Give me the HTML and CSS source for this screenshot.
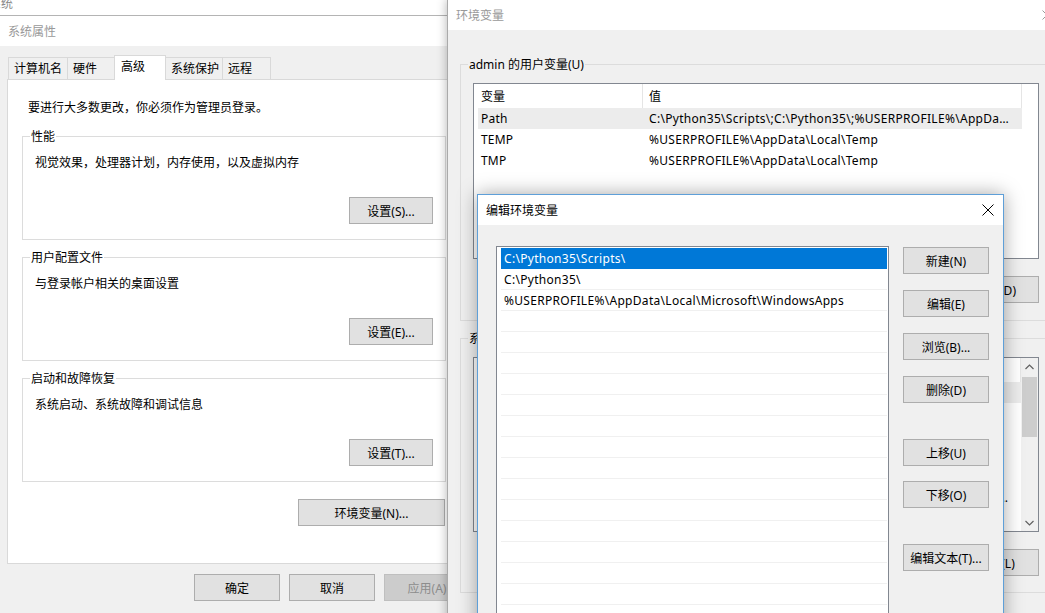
FILE: index.html
```html
<!DOCTYPE html>
<html lang="zh-CN">
<head>
  <meta charset="UTF-8" />
  <title>环境变量</title>
  <link rel="stylesheet" href="styles.css">
</head>
<body>

  <div class="parent-title">系统</div>

  <!-- 系统属性 -->
  <div class="window sys">
    <div class="titlebar">系统属性</div>
    <div class="tabs">
      <div class="tab w1">计算机名</div>
      <div class="tab w2">硬件</div>
      <div class="tab w3 active">高级</div>
      <div class="tab w4">系统保护</div>
      <div class="tab w5">远程</div>
    </div>
    <div class="panel">
      <div class="note">要进行大多数更改，你必须作为管理员登录。</div>

      <div class="group">
        <div class="group-label">性能</div>
        <div class="group-text">视觉效果，处理器计划，内存使用，以及虚拟内存</div>
        <div class="group-foot"><button class="btn btn-set">设置(S)...</button></div>
      </div>

      <div class="group next">
        <div class="group-label">用户配置文件</div>
        <div class="group-text">与登录帐户相关的桌面设置</div>
        <div class="group-foot"><button class="btn btn-set">设置(E)...</button></div>
      </div>

      <div class="group next">
        <div class="group-label">启动和故障恢复</div>
        <div class="group-text">系统启动、系统故障和调试信息</div>
        <div class="group-foot"><button class="btn btn-set">设置(T)...</button></div>
      </div>

      <div class="env-row"><button class="btn btn-env">环境变量(N)...</button></div>
    </div>
    <div class="footer">
      <button class="btn btn-dlg">确定</button>
      <button class="btn btn-dlg">取消</button>
      <button class="btn btn-dlg disabled">应用(A)</button>
    </div>
  </div>

  <!-- 环境变量 -->
  <div class="window env">
    <div class="titlebar">
      <span>环境变量</span>
      <svg class="env-close" width="10" height="10" viewBox="0 0 10 10"><path d="M0.5 0.5 L9.5 9.5 M9.5 0.5 L0.5 9.5" stroke="#999" stroke-width="1"/></svg>
    </div>

    <div class="group env-group user">
      <div class="group-label">admin 的用户变量(U)</div>
      <div class="listview lv-user">
        <div class="lv-main">
          <div class="lv-head">
            <div class="c1">变量</div>
            <div class="c2">值</div>
          </div>
          <div class="lv-row sel"><div class="c1">Path</div><div class="c2">C:\Python35\Scripts\;C:\Python35\;%USERPROFILE%\AppData\Local\Microsoft\WindowsApps;</div></div>
          <div class="lv-row"><div class="c1">TEMP</div><div class="c2">%USERPROFILE%\AppData\Local\Temp</div></div>
          <div class="lv-row"><div class="c1">TMP</div><div class="c2">%USERPROFILE%\AppData\Local\Temp</div></div>
        </div>
      </div>
      <div class="btn-row">
        <button class="btn btn-dlg">新建(N)...</button>
        <button class="btn btn-dlg">编辑(E)...</button>
        <button class="btn btn-dlg">删除(D)</button>
      </div>
    </div>

    <div class="group env-group system">
      <div class="group-label">系统变量(S)</div>
      <div class="listview lv-sys">
        <div class="lv-main">
          <div class="lv-head">
            <div class="c1">变量</div>
            <div class="c2">值</div>
          </div>
          <div class="lv-row sel"><div class="c1">CLASSPATH</div><div class="c2">.;%JAVA_HOME%\lib</div></div>
          <div class="lv-row"><div class="c1">ComSpec</div><div class="c2">C:\Windows\system32\cmd.exe</div></div>
          <div class="lv-row"><div class="c1">JAVA_HOME</div><div class="c2">C:\Program Files\Java\jdk1.8.0_101</div></div>
          <div class="lv-row"><div class="c1">NUMBER_OF_PROCESSORS</div><div class="c2">4</div></div>
          <div class="lv-row"><div class="c1">OS</div><div class="c2">Windows_NT</div></div>
          <div class="lv-row"><div class="c1">Path</div><div class="c2">C:\ProgramData\Oracle\Java\javapath;C:\Windows\system32;C:\Windows;C:\Windows\System32\Wbem</div></div>
          <div class="lv-row"><div class="c1">PATHEXT</div><div class="c2">.COM;.EXE;.BAT;.CMD</div></div>
        </div>
        <div class="scrollbar">
          <div class="sb-arrow">
            <svg width="9" height="6" viewBox="0 0 9 6"><path d="M0.5 5 L4.5 1 L8.5 5" fill="none" stroke="#606060" stroke-width="1.2"/></svg>
          </div>
          <div class="sb-track"><div class="sb-thumb"></div></div>
          <div class="sb-arrow">
            <svg width="9" height="6" viewBox="0 0 9 6"><path d="M0.5 1 L4.5 5 L8.5 1" fill="none" stroke="#606060" stroke-width="1.2"/></svg>
          </div>
        </div>
      </div>
      <div class="btn-row">
        <button class="btn btn-dlg">新建(W)...</button>
        <button class="btn btn-dlg">编辑(I)...</button>
        <button class="btn btn-dlg">删除(L)</button>
      </div>
    </div>
  </div>

  <!-- 编辑环境变量 -->
  <div class="window edit">
    <div class="titlebar">
      <span>编辑环境变量</span>
      <svg class="close" width="12" height="12" viewBox="0 0 12 12"><path d="M0.5 0.5 L11.5 11.5 M11.5 0.5 L0.5 11.5" stroke="#000" stroke-width="1"/></svg>
    </div>
    <div class="edit-body">
      <div class="path-list">
        <div class="path-row sel">C:\Python35\Scripts\</div>
        <div class="path-row">C:\Python35\</div>
        <div class="path-row">%USERPROFILE%\AppData\Local\Microsoft\WindowsApps</div>
        <div class="path-row"></div>
        <div class="path-row"></div>
        <div class="path-row"></div>
        <div class="path-row"></div>
        <div class="path-row"></div>
        <div class="path-row"></div>
        <div class="path-row"></div>
        <div class="path-row"></div>
        <div class="path-row"></div>
        <div class="path-row"></div>
        <div class="path-row"></div>
        <div class="path-row"></div>
        <div class="path-row"></div>
        <div class="path-row"></div>
        <div class="path-row"></div>
      </div>
      <div class="side-btns">
        <button class="btn btn-dlg">新建(N)</button>
        <button class="btn btn-dlg gap">编辑(E)</button>
        <button class="btn btn-dlg gap">浏览(B)...</button>
        <button class="btn btn-dlg gap">删除(D)</button>
        <button class="btn btn-dlg gap-big">上移(U)</button>
        <button class="btn btn-dlg gap-mid">下移(O)</button>
        <button class="btn btn-dlg gap-big">编辑文本(T)...</button>
      </div>
    </div>
  </div>

</body>
</html>
```

FILE: styles.css
```css
* {
  box-sizing: border-box;
}

body {
  margin: 0;
  width: 1045px;
  height: 613px;
  overflow: hidden;
  position: relative;
  background: #fff;
  font-family: "Noto Sans", "Noto Sans CJK SC", sans-serif;
  font-size: 12px;
  color: #000;
}

.parent-title {
  position: absolute;
  left: -11px;
  top: -4px;
  color: #888;
  line-height: 16px;
}

/* windows */
.window {
  position: absolute;
  background: #f0f0f0;
}

.titlebar {
  height: 30px;
  background: #fff;
  padding-left: 8px;
  color: #999;
  display: flex;
  justify-content: space-between;
  align-items: center;
}

.btn {
  height: 27px;
  padding: 0;
  border: 1px solid #adadad;
  background: #e1e1e1;
  font: inherit;
  color: #000;
  display: flex;
  align-items: center;
  justify-content: center;
  white-space: nowrap;
}

.btn.disabled {
  background: #cccccc;
  border-color: #bfbfbf;
  color: #8d8d8d;
}

.btn-set { width: 84px; }
.btn-env { width: 147px; }
.btn-dlg { width: 86px; }

/* system properties */
.sys {
  left: -1px;
  top: 15px;
  width: 480px;
  height: 620px;
  border: 1px solid #b4b4b4;
}

.tabs {
  display: flex;
  align-items: flex-end;
  height: 24px;
  margin-top: 9px;
  padding-left: 8px;
  position: relative;
  z-index: 1;
}

.tab {
  height: 22px;
  line-height: 21px;
  padding-left: 5px;
  margin-right: -1px;
  border: 1px solid #d9d9d9;
  border-bottom: none;
  background: #f0f0f0;
}

.tab.active {
  height: 25px;
  margin-bottom: -1px;
  padding-left: 6px;
  line-height: 22px;
  background: #fff;
  position: relative;
  z-index: 2;
}

.w1 { width: 60px; }
.w2 { width: 48px; }
.w3 { width: 52px; }
.w4 { width: 58px; }
.w5 { width: 49px; }

.panel {
  margin-left: 7px;
  width: 450px;
  height: 485px;
  padding-left: 14px;
  background: #fff;
  border: 1px solid #d9d9d9;
}

.note {
  margin: 20px 0 0 6px;
  line-height: 16px;
}

.group {
  width: 424px;
  height: 104px;
  margin-top: 20px;
  border: 1px solid #dcdcdc;
}

.group.next {
  margin-top: 17px;
}

.group-label {
  width: fit-content;
  margin: -8px 0 0 7px;
  padding: 0 1px;
  line-height: 16px;
  background: #fff;
}

.group-text {
  margin: 10px 0 0 12px;
  line-height: 16px;
}

.group-foot {
  display: flex;
  justify-content: flex-end;
  padding-right: 12px;
  margin-top: 26px;
}

.env-row {
  display: flex;
  justify-content: flex-end;
  width: 424px;
  padding-right: 1px;
  margin-top: 17px;
}

.footer {
  display: flex;
  gap: 9px;
  padding-left: 194px;
  margin-top: 10px;
}

/* environment variables */
.env {
  left: 447px;
  top: -1px;
  width: 640px;
  height: 640px;
  border: 1px solid #aaa;
  box-shadow: 0 0 10px rgba(0, 0, 0, 0.3);
}

.env-close {
  margin-right: 34px;
}

.env-group {
  width: 600px;
  margin: 34px 0 0 12px;
  height: 257px;
}

.env-group.system {
  margin-top: 17px;
  height: 255px;
}

.env-group .group-label {
  background: #f0f0f0;
}

.listview {
  margin: 10px 0 0 12px;
  width: 566px;
  border: 1px solid #828790;
  background: #fff;
  display: flex;
}

.lv-user { height: 176px; }
.lv-sys { height: 175px; }

.lv-main {
  flex: 1;
  overflow: hidden;
}

.lv-head {
  display: flex;
  height: 24px;
  padding-top: 2px;
  line-height: 22px;
}

.lv-head .c1 {
  width: 169px;
  margin-top: -2px;
  padding: 2px 0 0 7px;
  border-right: 1px solid #e5e5e5;
}

.lv-head .c2 {
  width: 379px;
  margin-top: -2px;
  padding: 2px 0 0 6px;
  border-right: 1px solid #e5e5e5;
}

.lv-row {
  display: flex;
  height: 21px;
  line-height: 22px;
  margin-left: 4px;
  width: 544px;
}

.lv-row.sel {
  background: #ececec;
}

.lv-row .c1 {
  width: 165px;
  padding-left: 3px;
  letter-spacing: 0.2px;
}

.lv-row .c2 {
  width: 379px;
  padding: 0 10px 0 6px;
  letter-spacing: 0.3px;
  white-space: nowrap;
  overflow: hidden;
  text-overflow: ellipsis;
}

.scrollbar {
  width: 17px;
  background: #f0f0f0;
  display: flex;
  flex-direction: column;
}

.sb-arrow {
  height: 17px;
  display: flex;
  align-items: center;
  justify-content: center;
}

.sb-track {
  flex: 1;
  padding: 2px 1px 0;
}

.sb-thumb {
  height: 60px;
  background: #cdcdcd;
}

.btn-row {
  display: flex;
  justify-content: flex-end;
  gap: 9px;
  width: 566px;
  margin: 17px 0 0 12px;
}

/* edit dialog */
.edit {
  left: 477px;
  top: 194px;
  width: 527px;
  height: 440px;
  border: 1px solid #5e9fd8;
  box-shadow: 0 0 18px rgba(0, 0, 0, 0.35);
}

.edit .titlebar {
  color: #000;
  padding-right: 9px;
}

.edit-body {
  display: flex;
  gap: 14px;
  padding: 21px 0 0 18px;
}

.path-list {
  width: 393px;
  height: 420px;
  padding-top: 1px;
  border: 1px solid #828790;
  background: #fff;
}

.path-row {
  height: 21px;
  line-height: 22px;
  margin: 0 1px 0 4px;
  padding-left: 3px;
  border-bottom: 1px solid #f0f0f0;
  letter-spacing: 0.3px;
  white-space: nowrap;
}

.path-row.sel {
  background: #0078d7;
  border-bottom-color: #0078d7;
  color: #fff;
}

.side-btns {
  display: flex;
  flex-direction: column;
  padding-top: 1px;
}

.side-btns .gap { margin-top: 16px; }
.side-btns .gap-mid { margin-top: 15px; }
.side-btns .gap-big { margin-top: 36px; }
```
